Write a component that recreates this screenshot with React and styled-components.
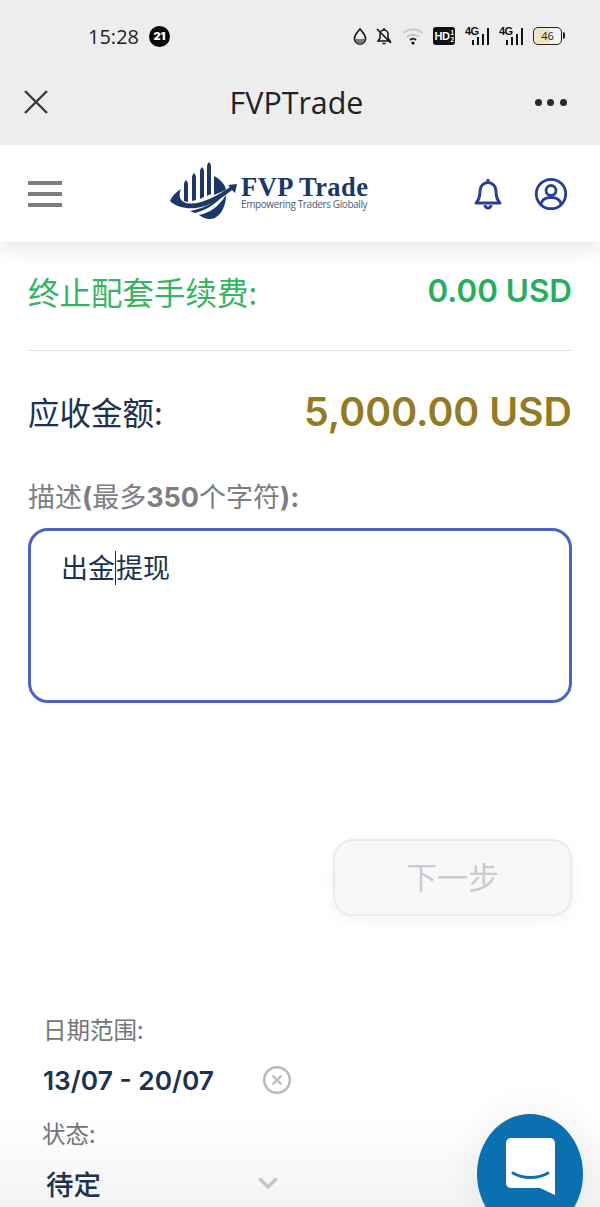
import styled, { createGlobalStyle } from 'styled-components';

const GlobalStyle = createGlobalStyle`
  html, body {
    margin: 0;
    padding: 0;
    background: #fff;
  }
  * {
    box-sizing: border-box;
  }
`;

const CJK = `"Noto Sans CJK SC", sans-serif`;
const LATIN = `Inter, "Noto Sans CJK SC", sans-serif`;

export default function App() {
  return (
    <>
      <GlobalStyle />
      <Screen>
        <TopChrome>
          <StatusBar>
            <Clock>15:28</Clock>
            <Badge>21</Badge>
            <StatusIcons>
              <svg width="16" height="18" viewBox="0 0 16 18">
                <path d="M8 2 C8 2 2.5 8 2.5 11.5 A5.5 5.5 0 0 0 13.5 11.5 C13.5 8 8 2 8 2Z" fill="none" stroke="#111" strokeWidth="1.7" />
                <path d="M3 12 H13 A5 5 0 0 1 3 12Z" fill="#777" />
              </svg>
              <BellSlot>
                <svg width="18" height="20" viewBox="0 0 18 20">
                  <path d="M3 15 H15 L13 12 V8 A4 4 0 0 0 5 8 V12Z" fill="none" stroke="#111" strokeWidth="1.5" />
                  <path d="M7.5 17.5 H10.5 M9 2 V4 M2 3 L16 17" stroke="#111" strokeWidth="1.5" />
                </svg>
              </BellSlot>
              <WifiSlot>
                <svg width="22" height="18" viewBox="0 0 22 18">
                  <path d="M1.5 6 A14 14 0 0 1 20.5 6" fill="none" stroke="#c6c6c6" strokeWidth="1.8" />
                  <path d="M5 10 A9 9 0 0 1 17 10" fill="none" stroke="#c6c6c6" strokeWidth="1.8" />
                  <path d="M8 13 A4.5 4.5 0 0 1 14 13" fill="none" stroke="#111" strokeWidth="1.8" />
                  <circle cx="11" cy="16" r="1.6" fill="#111" />
                </svg>
              </WifiSlot>
              <HdTag>HD<HdFraction><span>1</span><span>2</span></HdFraction></HdTag>
              <Signal />
              <Signal />
              <Battery><BatteryLevel>46</BatteryLevel></Battery>
            </StatusIcons>
          </StatusBar>
          <TitleBar>
            <svg width="28" height="28" viewBox="0 0 28 28">
              <path d="M3 3 L25 25 M25 3 L3 25" stroke="#3a3a3a" strokeWidth="2.4" />
            </svg>
            <PageTitle>FVPTrade</PageTitle>
            <Dots><i /><i /><i /></Dots>
          </TitleBar>
        </TopChrome>

        <AppHeader>
          <Burger><i /><i /><i /></Burger>
          <Logo>
            <LogoMark />
            <LogoText>
              <LogoName>FVP Trade</LogoName>
              <LogoTagline>Empowering Traders Globally</LogoTagline>
            </LogoText>
          </Logo>
          <HeaderActions>
            <svg width="32" height="34" viewBox="0 0 32 34">
              <path d="M4 26 C7 23 8 20 8 14 A8 8.5 0 0 1 24 14 C24 20 25 23 28 26 Z" fill="none" stroke="#2a3f92" strokeWidth="3" strokeLinejoin="round" />
              <path d="M13 28 A3 3 0 0 0 19 28" fill="none" stroke="#2a3f92" strokeWidth="3" />
              <path d="M16 2 V5" stroke="#2a3f92" strokeWidth="3" />
            </svg>
            <svg width="34" height="34" viewBox="0 0 34 34">
              <circle cx="17" cy="17" r="14.7" fill="none" stroke="#2a3f92" strokeWidth="2.8" />
              <circle cx="17" cy="13.5" r="5" fill="none" stroke="#2a3f92" strokeWidth="2.8" />
              <path d="M7 27 C8 21.5 12 20.5 17 20.5 C22 20.5 26 21.5 27 27" fill="none" stroke="#2a3f92" strokeWidth="2.8" />
            </svg>
          </HeaderActions>
        </AppHeader>

        <Content>
          <FeeRow>
            <FeeLabel>终止配套手续费:</FeeLabel>
            <FeeValue>0.00 USD</FeeValue>
          </FeeRow>
          <Divider />
          <TotalRow>
            <TotalLabel>应收金额:</TotalLabel>
            <TotalValue>5,000.00 USD</TotalValue>
          </TotalRow>
          <FieldLabel>描述<b>(</b>最多<b>350</b>个字符<b>):</b></FieldLabel>
          <TextBox>出金<Caret />提现</TextBox>
          <ButtonRow>
            <NextButton>下一步</NextButton>
          </ButtonRow>
          <Filters>
            <FilterLabel>日期范围:</FilterLabel>
            <DateRow>
              <DateValue>13/07 - 20/07</DateValue>
              <svg width="30" height="30" viewBox="0 0 30 30">
                <circle cx="15" cy="15" r="12.8" fill="none" stroke="#b6b9c0" strokeWidth="2.4" />
                <path d="M10.5 10.5 L19.5 19.5 M19.5 10.5 L10.5 19.5" stroke="#b6b9c0" strokeWidth="2.2" />
              </svg>
            </DateRow>
            <StatusLabel>状态:</StatusLabel>
            <SelectRow>
              <SelectValue>待定</SelectValue>
              <svg width="22" height="14" viewBox="0 0 22 14">
                <path d="M2.5 2.5 L11 11 L19.5 2.5" fill="none" stroke="#c4c6cb" strokeWidth="3.4" />
              </svg>
            </SelectRow>
          </Filters>
        </Content>

        <BottomFade />
        <ChatBubble>
          <svg width="49" height="57" viewBox="0 0 49 57">
            <path d="M5 0 H44 A5 5 0 0 1 49 5 V57 L34 50 H5 A5 5 0 0 1 0 45 V5 A5 5 0 0 1 5 0Z" fill="#fff" />
            <path d="M7 35 C17 41 32 41 42 35" fill="none" stroke="#0a70b0" strokeWidth="3" strokeLinecap="round" />
          </svg>
        </ChatBubble>
      </Screen>
    </>
  );
}

function LogoMark() {
  return (
    <svg width="70" height="58" viewBox="0 0 70 58">
      <g fill="#1d3766">
        <path d="M16 39 V22 Q16 20 18 18 Q20 20 20 22 V40 Z" />
        <path d="M24 39 V15 Q24 13 26 11 Q28 13 28 15 V38 Z" />
        <path d="M32 37 V9 Q32 7 34 5 Q36 7 36 9 V35 Z" />
        <path d="M39 34 V4 Q39 2 41 0 Q43 2 43 4 V32 Z" />
        <path d="M46 14 C52 17 57 22 58 28 L46 33 Z" />
        <path d="M2 39 C4 34 8 30 13 27 C10 34 12 39 18 41 C30 44 48 35 62 25 L60 23 L69 22 L67 31 L64 28 C54 36 42 44 28 46 C18 47 8 45 2 39 Z" />
        <path d="M22 49 C34 47 46 41 55 33 L53 36 C46 43 36 49 27 51 Z" />
        <path d="M31 53 C42 51 51 44 58 33 C58 46 51 57 42 57 C37 57 34 55 31 53 Z" />
      </g>
    </svg>
  );
}

function Signal() {
  return (
    <SignalWrap>
      <em>4G</em>
      <SignalBars>
        <i style={{ height: 5 }} />
        <i style={{ height: 8 }} />
        <i style={{ height: 11 }} />
        <i style={{ height: 17 }} />
      </SignalBars>
    </SignalWrap>
  );
}

const Screen = styled.div`
  position: relative;
  width: 600px;
  height: 1207px;
  overflow: hidden;
  background: #fff;
  font-family: ${LATIN};
`;

const TopChrome = styled.div`
  position: relative;
  z-index: 3;
  height: 145px;
  background: #ededed;
`;

const StatusBar = styled.div`
  display: flex;
  align-items: center;
  height: 72px;
  padding: 0 38px 0 88px;
`;

const Clock = styled.span`
  font-family: "Open Sans", sans-serif;
  font-size: 20px;
  color: #1c1c1c;
`;

const Badge = styled.span`
  width: 21px;
  height: 21px;
  margin-left: 10px;
  border-radius: 50%;
  background: #0a0a0a;
  color: #fff;
  font-size: 11px;
  font-weight: 900;
  display: flex;
  align-items: center;
  justify-content: center;
`;

const StatusIcons = styled.div`
  margin-left: auto;
  display: flex;
  align-items: center;
`;

const BellSlot = styled.span`
  display: flex;
  margin-left: 7px;
`;

const WifiSlot = styled.span`
  display: flex;
  margin-left: 9px;
`;

const HdTag = styled.span`
  margin-left: 9px;
  width: 22px;
  height: 18px;
  border-radius: 3px;
  background: #111;
  color: #fff;
  font: 800 11px "Liberation Sans", sans-serif;
  letter-spacing: -0.5px;
  display: flex;
  align-items: center;
  justify-content: center;
`;

const HdFraction = styled.span`
  margin-left: 1px;
  display: flex;
  flex-direction: column;
  font-size: 6.5px;
  line-height: 7px;
`;

const SignalWrap = styled.span`
  position: relative;
  margin-left: 10px;
  width: 24px;
  height: 18px;
  display: block;

  em {
    position: absolute;
    left: 0;
    top: -2px;
    font: 700 11px "Liberation Sans Narrow", "Liberation Sans", sans-serif;
    letter-spacing: -0.6px;
    color: #111;
  }
`;

const SignalBars = styled.span`
  position: absolute;
  right: 0;
  bottom: 0;
  display: flex;
  align-items: flex-end;
  gap: 2.5px;

  i {
    display: block;
    width: 2.5px;
    background: #111;
  }
`;

const Battery = styled.span`
  position: relative;
  margin-left: 10px;
  width: 29px;
  height: 18px;
  border: 1.5px solid #222;
  border-radius: 5px;
  padding: 1px;
  display: flex;

  &::after {
    content: '';
    position: absolute;
    right: -4px;
    top: 4px;
    width: 2.5px;
    height: 7px;
    background: #222;
    border-radius: 0 2px 2px 0;
  }
`;

const BatteryLevel = styled.span`
  width: 100%;
  background: linear-gradient(90deg, #f3e3b8 0, #f3e3b8 60%, #f4f4f4 60%);
  border-radius: 3px;
  font: 11px "Open Sans", sans-serif;
  color: #222;
  text-align: center;
  line-height: 13px;
`;

const TitleBar = styled.div`
  height: 60px;
  padding: 0 33px 0 22px;
  display: flex;
  align-items: center;
  justify-content: space-between;
`;

const PageTitle = styled.div`
  margin-left: 8px;
  font-family: "Open Sans", sans-serif;
  font-size: 30.4px;
  color: #222;
`;

const Dots = styled.div`
  display: flex;
  gap: 5.5px;

  i {
    display: block;
    width: 7px;
    height: 7px;
    border-radius: 50%;
    background: #2a2a2a;
  }
`;

const AppHeader = styled.header`
  position: relative;
  z-index: 2;
  height: 97px;
  background: #fff;
  box-shadow: 0 4px 22px rgba(0, 0, 0, 0.13);
  padding: 0 32px 0 28px;
  display: flex;
  align-items: center;
`;

const Burger = styled.div`
  width: 34px;
  display: flex;
  flex-direction: column;
  gap: 7px;

  i {
    display: block;
    height: 4px;
    background: #7c7e82;
  }
`;

const Logo = styled.div`
  margin: -6px 0 0 106px;
  display: flex;
  align-items: flex-start;
`;

const LogoText = styled.div`
  margin: 14px 0 0 3px;
  display: flex;
  flex-direction: column;
`;

const LogoName = styled.div`
  font-family: "Liberation Serif", serif;
  font-weight: 700;
  font-size: 26.5px;
  line-height: 23px;
  letter-spacing: 0.45px;
  color: #1d3766;
`;

const LogoTagline = styled.div`
  font-family: "Open Sans", sans-serif;
  font-size: 10px;
  line-height: 11px;
  letter-spacing: -0.4px;
  color: #4c5b78;
  white-space: nowrap;
`;

const HeaderActions = styled.div`
  margin-left: auto;
  display: flex;
  align-items: center;
  gap: 30px;
`;

const Content = styled.main`
  position: relative;
  z-index: 1;
  padding: 0 28px;
`;

const FeeRow = styled.div`
  height: 108px;
  padding-bottom: 11px;
  display: flex;
  align-items: center;
  justify-content: space-between;
`;

const FeeLabel = styled.span`
  font-family: ${CJK};
  font-size: 31.5px;
  color: #35b562;
`;

const FeeValue = styled.span`
  font-size: 31.4px;
  font-weight: 600;
  color: #27ae5c;
`;

const Divider = styled.hr`
  margin: 0;
  border: 0;
  height: 1px;
  background: #dfe0e2;
`;

const TotalRow = styled.div`
  height: 120px;
  display: flex;
  align-items: center;
  justify-content: space-between;
`;

const TotalLabel = styled.span`
  font-family: ${CJK};
  font-size: 31.5px;
  color: #1c3350;
`;

const TotalValue = styled.span`
  font-size: 39.3px;
  font-weight: 600;
  color: #947a24;
`;

const FieldLabel = styled.div`
  font-family: ${CJK};
  font-size: 27px;
  line-height: 34px;
  color: #7b7e84;
  margin-top: 8px;

  b {
    font-family: Inter, sans-serif;
    font-weight: 700;
  }
`;

const TextBox = styled.div`
  margin-top: 13px;
  height: 175px;
  padding: 16px 30px;
  border: 3px solid #4a64c4;
  border-radius: 20px;
  font-family: ${CJK};
  font-size: 27px;
  line-height: 40px;
  color: #1c3350;
`;

const Caret = styled.span`
  display: inline-block;
  width: 1px;
  height: 34px;
  margin-bottom: -7px;
  background: #1c3350;
`;

const ButtonRow = styled.div`
  margin-top: 136px;
  display: flex;
  justify-content: flex-end;
`;

const NextButton = styled.button`
  width: 239px;
  height: 77px;
  padding-bottom: 5px;
  background: #f8f8f9;
  border: 2px solid #ececee;
  border-radius: 20px;
  box-shadow: 0 4px 14px rgba(0, 0, 0, 0.05);
  font-family: ${CJK};
  font-size: 31px;
  color: #c9cbd1;
`;

const Filters = styled.section`
  margin-top: 97px;
  padding-left: 15px;
`;

const FilterLabel = styled.div`
  font-family: ${CJK};
  font-size: 23.5px;
  line-height: 32px;
  color: #72757b;
`;

const DateRow = styled.div`
  margin-top: 17px;
  display: flex;
  align-items: center;
  height: 36px;
`;

const DateValue = styled.span`
  width: 219px;
  font-size: 26.3px;
  font-weight: 600;
  color: #1c3350;
`;

const StatusLabel = styled(FilterLabel)`
  margin: 19px 0 0 -1px;
`;

const SelectRow = styled.div`
  margin-top: 14px;
  display: flex;
  align-items: center;
  padding-left: 3px;
`;

const SelectValue = styled.span`
  width: 211px;
  font-family: ${CJK};
  font-size: 27.5px;
  font-weight: 500;
  color: #1c3350;
`;

const BottomFade = styled.div`
  position: absolute;
  left: 0;
  right: 0;
  bottom: 0;
  height: 90px;
  background: linear-gradient(rgba(236, 236, 236, 0), rgba(236, 236, 236, 0.6));
  pointer-events: none;
`;

const ChatBubble = styled.div`
  position: absolute;
  z-index: 2;
  left: 477px;
  top: 1114px;
  width: 106px;
  height: 120px;
  border-radius: 50%;
  background: #0a70b0;
  box-shadow: 0 0 40px rgba(0, 0, 0, 0.08);
  display: flex;
  justify-content: center;
  padding-top: 24px;
`;
